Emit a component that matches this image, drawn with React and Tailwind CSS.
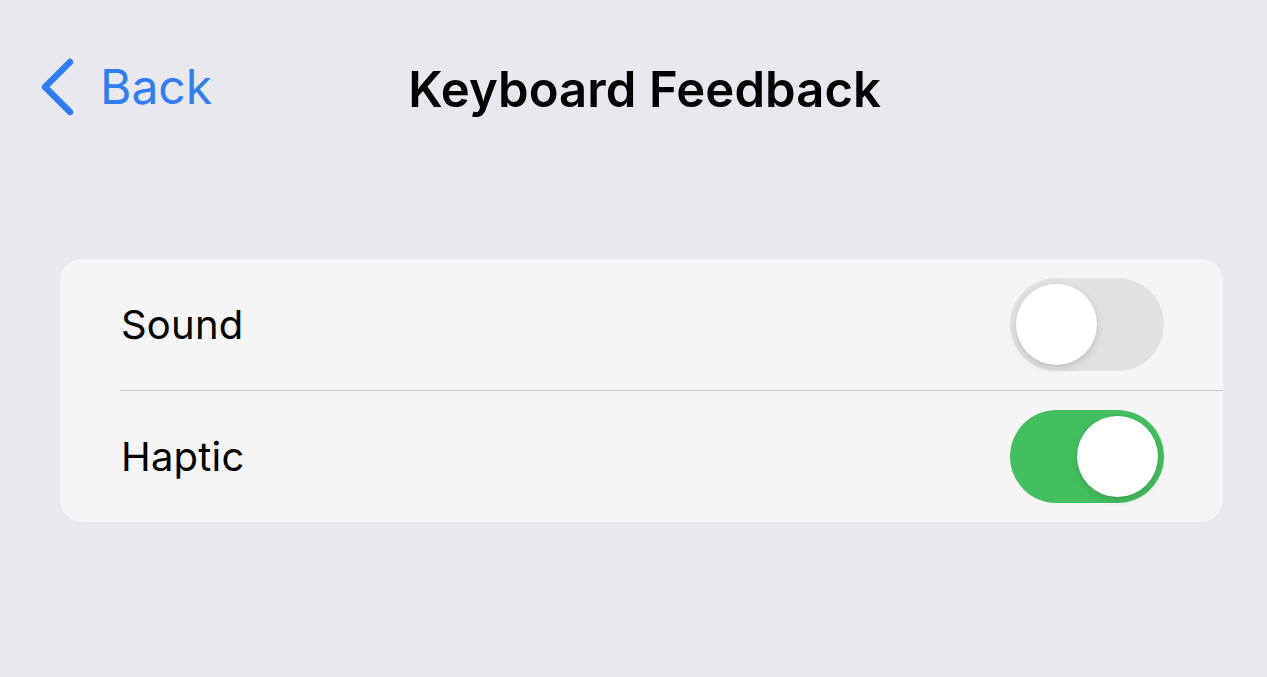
import React from "react";

function Toggle({ on }) {
  return (
    <div
      className={`flex h-[93px] w-[154px] items-center rounded-full px-[6px] ${
        on ? "justify-end bg-[#44bf5f]" : "justify-start bg-[#e2e2e5]"
      }`}
    >
      <div className="h-[81px] w-[81px] rounded-full bg-white shadow-[0_3px_8px_rgba(0,0,0,0.15),0_1px_1px_rgba(0,0,0,0.06)]" />
    </div>
  );
}

function Row({ label, on, divider }) {
  return (
    <div className="flex flex-col">
      <div className="flex h-[131px] items-center justify-between pl-[61px] pr-[59px]">
        <span className="text-[40px] leading-none tracking-[0.2px] text-black">{label}</span>
        <Toggle on={on} />
      </div>
      {divider && <div className="ml-[60px] h-px bg-[#c6c6c8]" />}
    </div>
  );
}

export default function App() {
  return (
    <div
      className="flex h-[677px] w-[1267px] flex-col bg-[#e9e8ee]"
      style={{ fontFamily: "Inter, 'Noto Sans', sans-serif" }}
    >
      <header className="flex h-[176px] items-start pt-[58px]">
        <button className="flex items-center gap-[26px] pl-[40px] text-[#2f7cf4]">
          <svg width="34" height="58" viewBox="0 0 34 58" fill="none">
            <path
              d="M30 4 L5 29 L30 54"
              stroke="currentColor"
              strokeWidth="6.5"
              strokeLinecap="round"
              strokeLinejoin="round"
            />
          </svg>
          <span className="text-[48px] leading-none">Back</span>
        </button>
        <h1 className="ml-[196px] mt-[7px] text-[49px] font-semibold leading-none tracking-[0.1px] text-black">
          Keyboard Feedback
        </h1>
      </header>
      <div className="pl-[60px] pr-[44px] pt-[83px]">
        <div className="overflow-hidden rounded-[22px] bg-[#f5f5f5]">
          <Row label="Sound" on={false} divider />
          <Row label="Haptic" on />
        </div>
      </div>
    </div>
  );
}
